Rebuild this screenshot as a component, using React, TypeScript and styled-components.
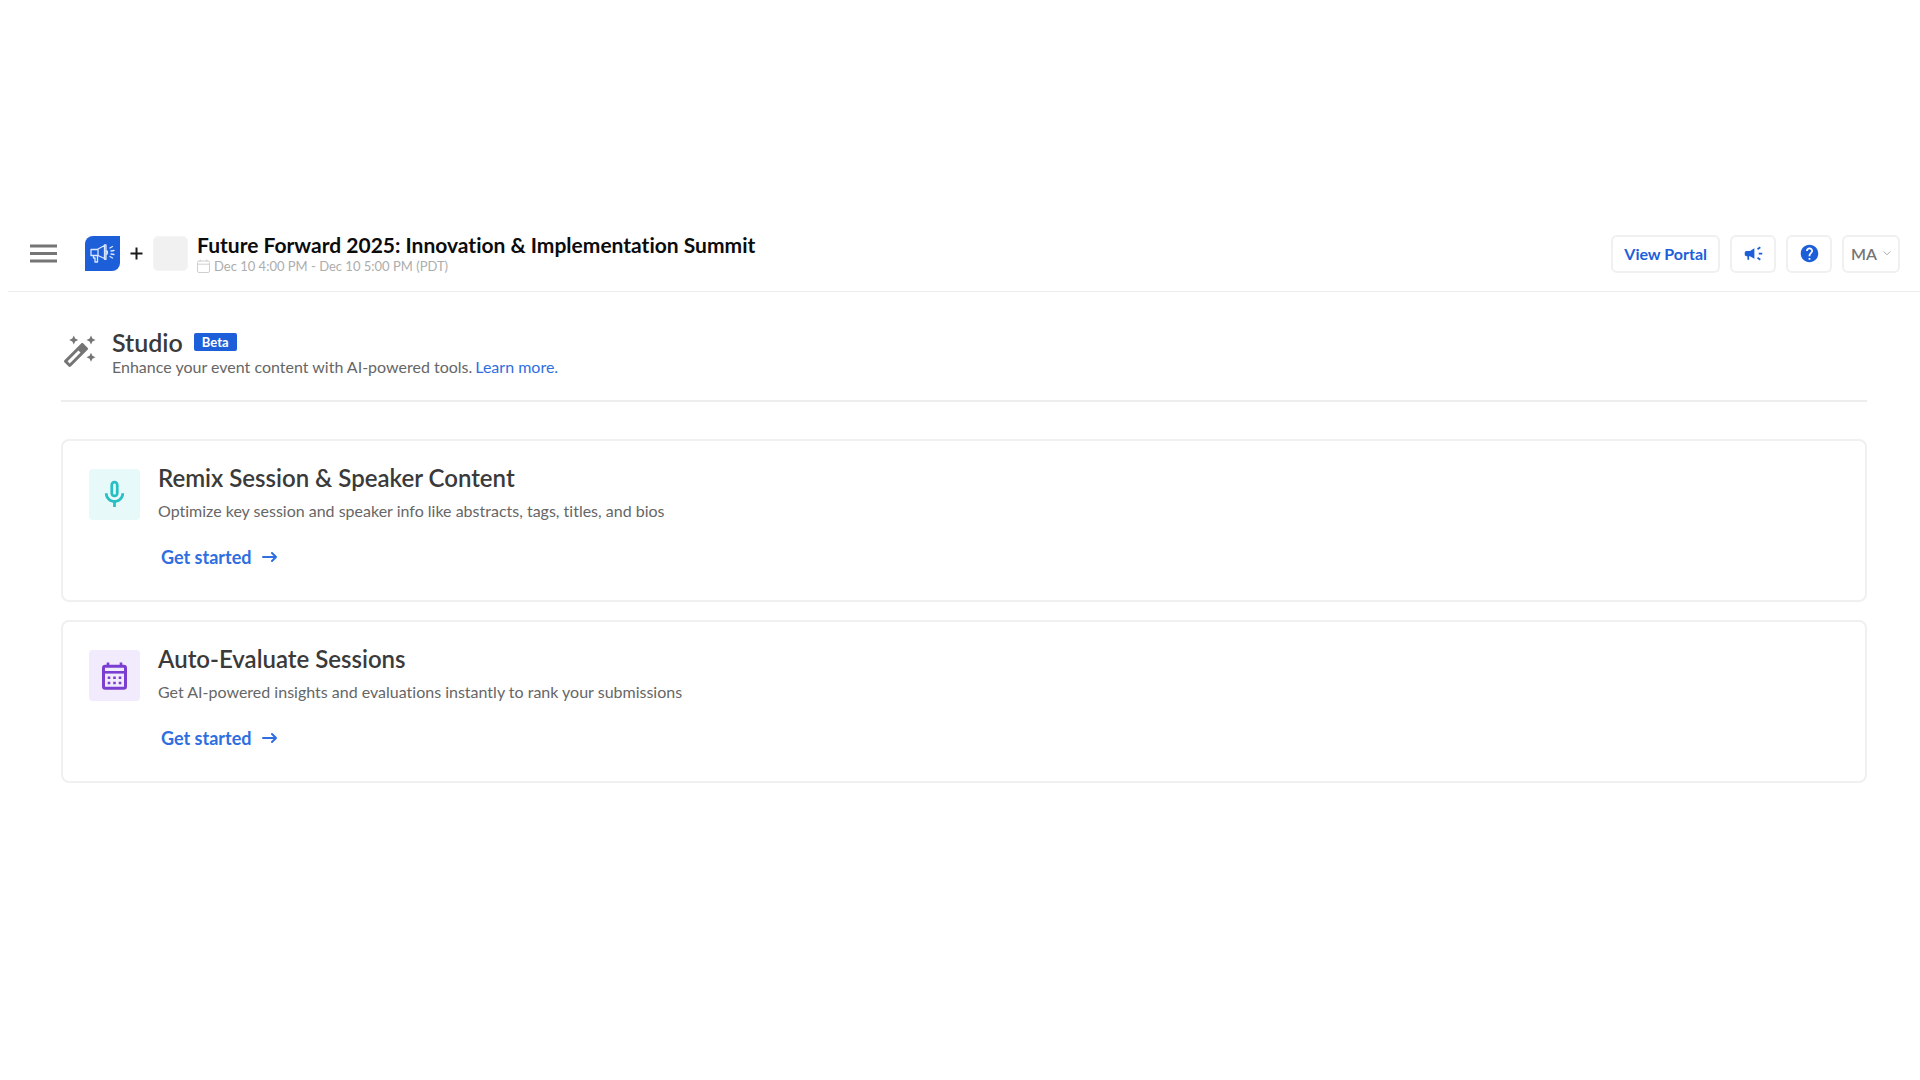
import React from "react";
import styled, { createGlobalStyle } from "styled-components";

const color = {
  blue: "#1d5fd9",
  link: "#2f6ee0",
  ink: "#3a3a3a",
  text: "#666666",
  muted: "#adadad",
  icon: "#757575",
  line: "#ededed",
};

const GlobalStyle = createGlobalStyle`
  *, *::before, *::after { box-sizing: border-box; }
  body {
    margin: 0;
    background: #ffffff;
    color: ${color.ink};
    font-family: Lato, "Open Sans", sans-serif;
    font-variant-ligatures: none;
  }
  h1, h2, p { margin: 0; }
  button { font: inherit; cursor: pointer; }
  svg { display: block; flex: none; }
`;

const Page = styled.div`
  min-height: 100vh;
  padding-top: 216px;
`;

const Header = styled.header`
  display: flex;
  align-items: center;
  justify-content: space-between;
  min-height: 76px;
  margin-left: 8px;
  padding: 0 20px;
  border-bottom: 1px solid ${color.line};
`;

const HeaderGroup = styled.div`
  display: flex;
  align-items: center;
  gap: ${({ $gap }: { $gap: number }) => $gap}px;
`;

const MenuButton = styled.button`
  display: flex;
  margin-right: 16px;
  padding: 0 2px;
  border: 0;
  background: none;
  color: ${color.icon};
`;

const Plus = styled.span`
  display: flex;
  color: #1a1a1a;
`;

const LogoPlaceholder = styled.div`
  width: 35px;
  height: 35px;
  border: 1px solid #f4f4f4;
  border-radius: 5px;
  background: #f1f1f1;
`;

const EventName = styled.div`
  font-size: 21px;
  line-height: 24px;
  font-weight: 700;
  color: #0c0c0c;
`;

const EventDate = styled.div`
  display: flex;
  align-items: center;
  gap: 4px;
  font-size: 13px;
  line-height: 18px;
  color: ${color.muted};
`;

const HeaderButton = styled.button`
  display: flex;
  align-items: center;
  justify-content: center;
  gap: 6px;
  height: 38px;
  min-width: 46px;
  padding: 0 ${({ $pad = 0 }: { $pad?: number; $muted?: boolean }) => $pad}px;
  border: 2px solid #f0f0f0;
  border-radius: 6px;
  background: #ffffff;
  color: ${({ $muted }) => ($muted ? color.icon : color.blue)};
  font-size: 16px;
  line-height: 20px;
  font-weight: ${({ $muted }) => ($muted ? 600 : 700)};
`;

const Main = styled.main`
  padding: 35px 53px 0 61px;
`;

const Intro = styled.div`
  display: flex;
  align-items: center;
  gap: 15px;
  padding-bottom: 23px;
  border-bottom: 2px solid ${color.line};
  color: ${color.icon};
`;

const TitleRow = styled.div`
  display: flex;
  align-items: center;
  gap: 11px;
`;

const Title = styled.h1`
  font-size: 25px;
  line-height: 30px;
  font-weight: 600;
  color: ${color.ink};
`;

const Badge = styled.span`
  padding: 0 8px;
  border-radius: 2px;
  background: ${color.blue};
  color: #ffffff;
  font-size: 13px;
  line-height: 18px;
  font-weight: 700;
`;

const Text = styled.p`
  font-size: 16px;
  line-height: 20px;
  color: ${color.text};
`;

const Link = styled.a`
  color: ${color.link};
  text-decoration: none;
`;

const InlineLink = styled(Link)`
  margin-left: 3px;
`;

const CardList = styled.div`
  display: grid;
  gap: 18px;
  padding-top: 37px;
`;

const Card = styled.section`
  display: flex;
  gap: 18px;
  padding: 23px 26px 30px;
  border: 2px solid #f0f0f0;
  border-radius: 8px;
`;

const IconTile = styled.div`
  display: flex;
  flex: none;
  align-items: center;
  justify-content: center;
  width: 51px;
  height: 51px;
  margin-top: 5px;
  border-radius: 4px;
  background: ${({ $background }: { $background: string }) => $background};
`;

const CardTitle = styled.h2`
  margin-bottom: 9px;
  font-size: 24px;
  line-height: 28px;
  font-weight: 600;
`;

const StartLink = styled(Link)`
  display: inline-flex;
  align-items: center;
  gap: 11px;
  margin-top: 23px;
  padding-left: 3px;
  font-size: 18px;
  line-height: 26px;
  font-weight: 700;
`;

const HamburgerIcon = () => (
  <svg width="27" height="19" viewBox="0 0 27 19" fill="currentColor" aria-hidden="true">
    <path d="M0 0.5h27v3H0zM0 8h27v3H0zM0 15.5h27v3H0z" />
  </svg>
);

const LogoIcon = () => (
  <svg width="35" height="35" viewBox="0 0 35 35" aria-hidden="true">
    <path d="M8 0h27v27a8 8 0 0 1-8 8H0V8a8 8 0 0 1 8-8z" fill={color.blue} />
    <g fill="none" stroke="#dbe7ff" strokeWidth="1.3" strokeLinejoin="round" strokeLinecap="round">
      <path d="M6 13.500h7v6H6zM13 13l6.500-3.500v13L13 19.500zM19.500 8.800h1.500v14.500h-1.500zM8.500 19.500v2.500h1.500v4h2.500v-6.500M21 14.500c2 0 2 4 0 4" />
      <path d="M25 12l2.500-1.500M26 15l3-.5M26 18l3 .5M25 20.500l2.500 1.500" />
    </g>
  </svg>
);

const PlusIcon = () => (
  <svg width="13" height="13" viewBox="0 0 13 13" fill="currentColor" aria-hidden="true">
    <path d="M5.500 0.500h2v5h5v2h-5v5h-2v-5h-5v-2h5z" />
  </svg>
);

const DateIcon = () => (
  <svg width="13" height="14" viewBox="0 0 13 14" fill="none" stroke="#cfcfcf" aria-hidden="true">
    <rect x="0.5" y="2" width="12" height="11.5" rx="1.5" />
    <path d="M0.5 5.2h12M3.2 0.5v2M9.8 0.5v2" />
  </svg>
);

const CampaignIcon = () => (
  <svg width="21" height="21" viewBox="0 0 24 24" fill="currentColor" aria-hidden="true">
    <path d="M18 11v2h4v-2h-4zm-2 6.61c.96.71 2.21 1.65 3.2 2.39.4-.53.8-1.07 1.2-1.6-.99-.74-2.24-1.68-3.2-2.4-.4.54-.8 1.08-1.2 1.61zM20.4 5.6c-.4-.53-.8-1.07-1.2-1.6-.99.74-2.24 1.68-3.2 2.4.4.53.8 1.07 1.2 1.6.96-.72 2.21-1.65 3.2-2.4zM4 9c-1.1 0-2 .9-2 2v2c0 1.100.9 2 2 2h1v4h2v-4h1l5 3V6L8 9H4z" />
  </svg>
);

const HelpIcon = () => (
  <svg width="21" height="21" viewBox="0 0 24 24" fill="currentColor" aria-hidden="true">
    <path d="M12 2C6.480 2 2 6.480 2 12s4.480 10 10 10 10-4.480 10-10S17.520 2 12 2zm1 17h-2v-2h2v2zm2.070-7.750l-.9.920C13.450 12.900 13 13.500 13 15h-2v-.5c0-1.100.450-2.100 1.170-2.830l1.240-1.260c.370-.360.590-.860.590-1.410 0-1.100-.9-2-2-2s-2 .9-2 2H8c0-2.210 1.790-4 4-4s4 1.790 4 4c0 .880-.360 1.680-.930 2.250z" />
  </svg>
);

const ChevronIcon = () => (
  <svg width="8" height="5" viewBox="0 0 8 5" fill="none" stroke="#a8a8a8" strokeLinecap="round" aria-hidden="true">
    <path d="M1 0.8l3 3 3-3" />
  </svg>
);

const WandIcon = () => (
  <svg width="36" height="36" viewBox="0 0 24 24" fill="currentColor" aria-hidden="true">
    <path d="M20 7l.94-2.060L23 4l-2.060-.940L20 1l-.940 2.060L17 4l2.060.940zM8.500 7l.940-2.060L11.500 4l-2.060-.940L8.500 1l-.940 2.060L5.500 4l2.060.940zM20 12.500l-.940 2.060-2.060.940 2.060.940.940 2.060.940-2.060L23 15.500l-2.060-.940zM17.710 9.120l-2.830-2.830C14.680 6.100 14.430 6 14.170 6c-.260 0-.510.100-.710.290L2.290 17.460c-.390.390-.390 1.020 0 1.410l2.830 2.830c.200.200.450.300.710.300s.510-.100.710-.290l11.170-11.170c.390-.390.390-1.030 0-1.420zM5.830 19.590l-1.410-1.410L11.590 11 13 12.410l-7.170 7.180z" />
  </svg>
);

const MicIcon = () => (
  <svg width="33" height="33" viewBox="0 0 24 24" fill="#25bfc4" aria-hidden="true">
    <path d="M12 14c1.660 0 3-1.340 3-3V5c0-1.660-1.340-3-3-3S9 3.340 9 5v6c0 1.660 1.340 3 3 3zm-1-9c0-.550.450-1 1-1s1 .450 1 1v6c0 .550-.450 1-1 1s-1-.450-1-1V5zm6 6c0 2.760-2.240 5-5 5s-5-2.240-5-5H5c0 3.530 2.610 6.430 6 6.920V21h2v-3.080c3.390-.490 6-3.390 6-6.920h-2z" />
  </svg>
);

const CalendarIcon = () => (
  <svg width="25" height="28" viewBox="0 0 25 28" fill="none" stroke="#7a3fd0" aria-hidden="true">
    <path d="M6 0.500v4M19 0.500v4" strokeWidth="2.600" />
    <rect x="1.500" y="4.300" width="22" height="22" rx="1.800" strokeWidth="3" />
    <path d="M2 10.300h21" strokeWidth="2.600" />
    <path d="M5.700 15.800h2.600M11.200 15.800h2.600M16.700 15.800h2.600M5.700 21h2.600M11.200 21h2.600M16.700 21h2.600" strokeWidth="2.600" />
  </svg>
);

const ArrowIcon = () => (
  <svg width="15" height="12" viewBox="0 0 15 12" fill="none" stroke="currentColor" strokeWidth="2" strokeLinecap="round" strokeLinejoin="round" aria-hidden="true">
    <path d="M1 6h13M10 2l4 4-4 4" />
  </svg>
);

const tools = [
  {
    title: "Remix Session & Speaker Content",
    description: "Optimize key session and speaker info like abstracts, tags, titles, and bios",
    background: "#e8f9f9",
    icon: <MicIcon />,
  },
  {
    title: "Auto-Evaluate Sessions",
    description: "Get AI-powered insights and evaluations instantly to rank your submissions",
    background: "#f1ebfd",
    icon: <CalendarIcon />,
  },
];

export default function App() {
  return (
    <>
      <GlobalStyle />
      <Page>
        <Header>
          <HeaderGroup $gap={9}>
            <HeaderGroup $gap={10}>
              <MenuButton aria-label="Open menu">
                <HamburgerIcon />
              </MenuButton>
              <LogoIcon />
              <Plus>
                <PlusIcon />
              </Plus>
              <LogoPlaceholder />
            </HeaderGroup>
            <div>
              <EventName>Future Forward 2025: Innovation &amp; Implementation Summit</EventName>
              <EventDate>
                <DateIcon />
                Dec 10 4:00 PM - Dec 10 5:00 PM (PDT)
              </EventDate>
            </div>
          </HeaderGroup>
          <HeaderGroup $gap={10}>
            <HeaderButton $pad={11}>View Portal</HeaderButton>
            <HeaderButton aria-label="Announcements">
              <CampaignIcon />
            </HeaderButton>
            <HeaderButton aria-label="Help">
              <HelpIcon />
            </HeaderButton>
            <HeaderButton $pad={7} $muted aria-haspopup="menu">
              MA
              <ChevronIcon />
            </HeaderButton>
          </HeaderGroup>
        </Header>
        <Main>
          <Intro>
            <WandIcon />
            <div>
              <TitleRow>
                <Title>Studio</Title>
                <Badge>Beta</Badge>
              </TitleRow>
              <Text>
                Enhance your event content with AI-powered tools.
                <InlineLink href="#learn">Learn more.</InlineLink>
              </Text>
            </div>
          </Intro>
          <CardList>
            {tools.map((tool) => (
              <Card key={tool.title}>
                <IconTile $background={tool.background}>{tool.icon}</IconTile>
                <div>
                  <CardTitle>{tool.title}</CardTitle>
                  <Text>{tool.description}</Text>
                  <StartLink href="#start">
                    Get started
                    <ArrowIcon />
                  </StartLink>
                </div>
              </Card>
            ))}
          </CardList>
        </Main>
      </Page>
    </>
  );
}
